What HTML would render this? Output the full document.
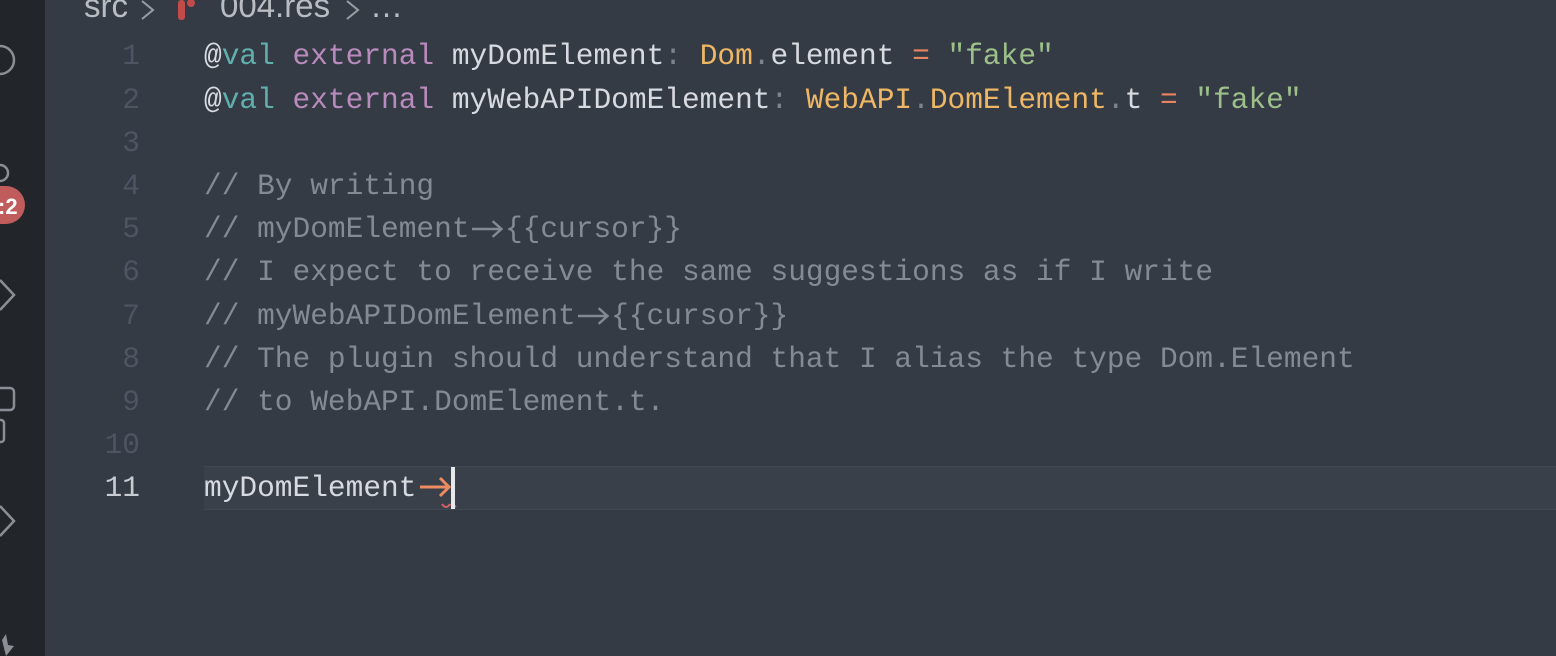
<!DOCTYPE html>
<html><head><meta charset="utf-8"><style>
html,body{margin:0;padding:0;width:1556px;height:656px;overflow:hidden;background:#353b45;}
#side{position:absolute;left:0;top:0;width:45px;height:656px;background:#22262b;}
.bc{position:absolute;top:-13px;font:33px "Liberation Sans",sans-serif;color:#b9bdc3;white-space:pre;}
.ln{position:absolute;left:60px;width:80px;text-align:right;font:29.5px/43.2px "Liberation Mono",monospace;color:#4d5562;}
.code{position:absolute;left:204px;font:29.5px/43.2px "Liberation Mono",monospace;color:#d7dae0;white-space:pre;}
.c{color:#848a93}.t{color:#5fb0ad}.k{color:#b98bbd}.y{color:#eeb765}.s{color:#9dc08a}.o{color:#e8845f}.p{color:#7d838c}
.ar{display:inline-block;width:2ch;height:20px;vertical-align:middle;}
#hl{position:absolute;left:204px;top:466px;width:1352px;height:42px;background:#3a404a;border-top:1px solid #424853;border-bottom:1px solid #424853;}
</style></head><body>
<div id="side">
<svg width="45" height="656" style="position:absolute;left:0;top:0">
<circle cx="0" cy="60" r="14" fill="none" stroke="#8a8f96" stroke-width="2.5"/>
<circle cx="0" cy="173" r="8" fill="none" stroke="#8a8f96" stroke-width="2.5"/>
<path d="M0 280 L14 295 L0 310" fill="none" stroke="#8a8f96" stroke-width="2.5"/>
<rect x="-10" y="388" width="24" height="22" rx="4" fill="none" stroke="#8a8f96" stroke-width="2.5"/>
<rect x="-10" y="420" width="14" height="22" rx="3" fill="none" stroke="#8a8f96" stroke-width="2.5"/>
<path d="M0 506 L14 521 L0 536" fill="none" stroke="#8a8f96" stroke-width="2.5"/>
<path d="M2 640 L6 634 L8 645 L14 646 L6 656 Z" fill="#8a8f96"/>
<rect x="-20" y="186" width="45" height="38" rx="19" fill="#c05c5c"/>
<text x="-2" y="214" font-family="Liberation Sans" font-size="22" font-weight="bold" fill="#fff">:2</text>
</svg>
</div>
<div class="bc" style="left:84px">src</div>
<svg style="position:absolute;left:138px;top:0" width="20" height="22"><path d="M4 1 L15 10 L4 19" fill="none" stroke="#9a9ea4" stroke-width="2"/></svg>
<div class="bc" style="left:220px">004.res</div>
<svg style="position:absolute;left:343px;top:0" width="20" height="22"><path d="M4 1 L15 10 L4 19" fill="none" stroke="#9a9ea4" stroke-width="2"/></svg>
<div class="bc" style="left:370px">…</div>
<svg style="position:absolute;left:176px;top:0" width="20" height="22"><rect x="2" y="0" width="7" height="20" rx="3" fill="#c14b4b"/><circle cx="15" cy="3" r="4" fill="#c14b4b"/></svg>
<div id="hl"></div>
<div class="ln" style="top:35.4px">1<br>2<br>3<br>4<br>5<br>6<br>7<br>8<br>9<br>10<br><span style="color:#c8ccd2">11</span></div>
<div class="code" style="top:35.4px">@<span class="t">val</span> <span class="k">external</span> myDomElement<span class="p">:</span> <span class="y">Dom</span><span class="p">.</span>element <span class="o">=</span> <span class="s">"fake"</span>
@<span class="t">val</span> <span class="k">external</span> myWebAPIDomElement<span class="p">:</span> <span class="y">WebAPI</span><span class="p">.</span><span class="y">DomElement</span><span class="p">.</span>t <span class="o">=</span> <span class="s">"fake"</span>

<span class="c">// By writing</span>
<span class="c">// myDomElement<svg class="ar" viewBox="0 0 36 20"><path d="M2 10 H32 M23 2 L32 10 L23 18" fill="none" stroke="#848a93" stroke-width="2.5"/></svg>{{cursor}}</span>
<span class="c">// I expect to receive the same suggestions as if I write</span>
<span class="c">// myWebAPIDomElement<svg class="ar" viewBox="0 0 36 20"><path d="M2 10 H32 M23 2 L32 10 L23 18" fill="none" stroke="#848a93" stroke-width="2.5"/></svg>{{cursor}}</span>
<span class="c">// The plugin should understand that I alias the type Dom.Element</span>
<span class="c">// to WebAPI.DomElement.t.</span>

myDomElement</div>
<svg style="position:absolute;left:418px;top:474px" width="40" height="40"><path d="M2 13 H31 M22 4 L31 13 L22 22" fill="none" stroke="#ec8a60" stroke-width="3"/><path d="M24 30 Q28 36 32 30 M33 30 Q35 34 38 32" fill="none" stroke="#d65f6a" stroke-width="2"/></svg>
<div style="position:absolute;left:451px;top:467px;width:4px;height:42px;background:#e6e8eb"></div>
</body></html>
